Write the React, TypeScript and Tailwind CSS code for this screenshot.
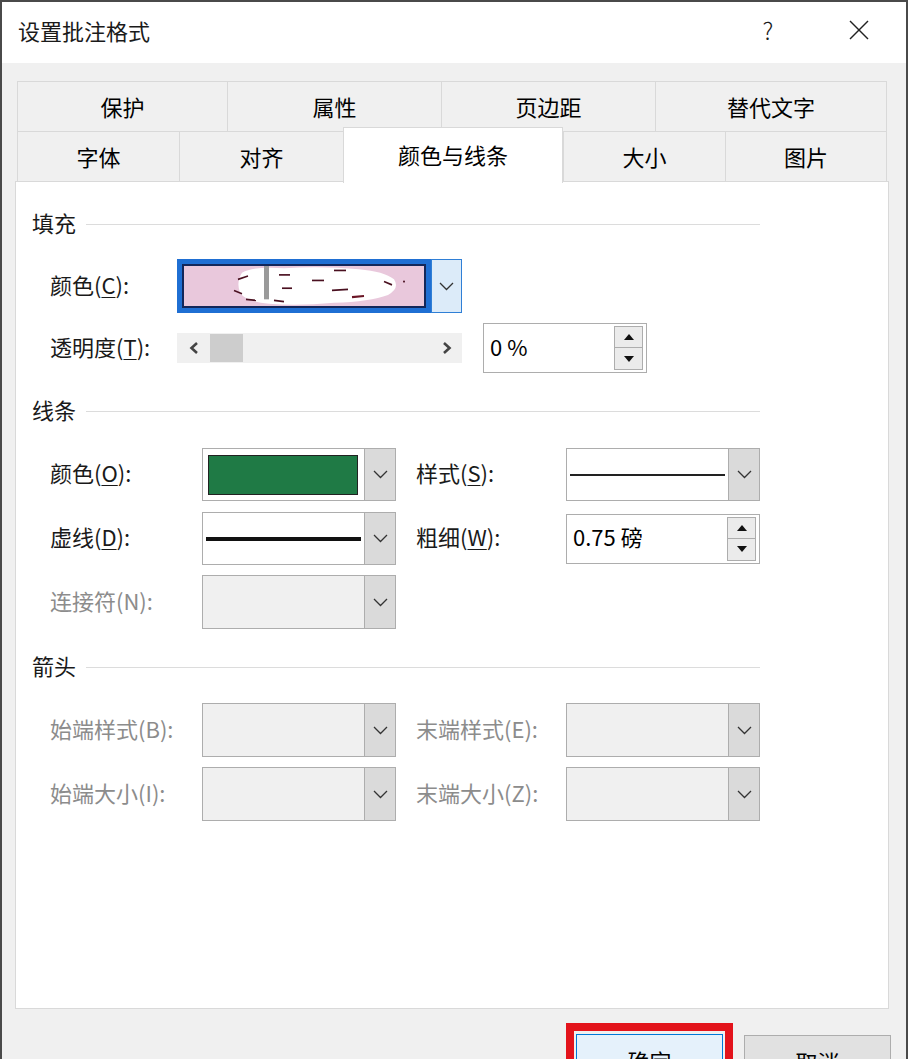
import type { ReactNode } from 'react'

const Chevron = () => (
  <svg width="15" height="9" viewBox="0 0 15 9" fill="none">
    <polyline points="1,1 7.5,7.5 14,1" stroke="#333" strokeWidth="1.3" />
  </svg>
)

const Caret = ({ up }: { up?: boolean }) => (
  <svg width="10" height="6" viewBox="0 0 10 6">
    <polygon points={up ? '0,6 5,0 10,6' : '0,0 10,0 5,6'} fill="#111" />
  </svg>
)

function Label({ text, u, disabled, w }: { text: string; u?: string; disabled?: boolean; w: string }) {
  // text like 颜色(C): where u is the underlined key letter
  if (!u) {
    return <div className={`${w} shrink-0 pb-[5px] ${disabled ? 'text-[#8c8c8c]' : 'text-[#1a1a1a]'}`}>{text}</div>
  }
  const [before, after] = text.split(u)
  return (
    <div className={`${w} shrink-0 pb-[5px] text-[#1a1a1a]`}>
      {before}
      <span className="underline underline-offset-[3px] decoration-1">{u}</span>
      {after}
    </div>
  )
}

function Combo({ children, disabled }: { children?: ReactNode; disabled?: boolean }) {
  return (
    <div className={`flex w-[194px] h-full border border-[#adadad] ${disabled ? 'bg-[#f0f0f0]' : 'bg-white'}`}>
      <div className="flex-1 min-w-0 flex items-center">{children}</div>
      <div className="w-[31px] shrink-0 flex items-center justify-center border-l border-[#adadad] bg-[#dadada]">
        <Chevron />
      </div>
    </div>
  )
}

function Spinner({ value, w }: { value: string; w: string }) {
  return (
    <div className={`${w} h-[50px] flex items-center border border-[#adadad] bg-white`}>
      <div className="flex-1 pl-[6px] pb-[5px]">{value}</div>
      <div className="flex flex-col mr-[3px]">
        <div className="w-[29px] h-[22px] flex items-center justify-center border border-[#adadad] bg-[#ebebeb]">
          <Caret up />
        </div>
        <div className="w-[29px] h-[22px] flex items-center justify-center border border-t-0 border-[#adadad] bg-[#ebebeb]">
          <Caret />
        </div>
      </div>
    </div>
  )
}

function Header({ text }: { text: string }) {
  return (
    <div className="flex items-center h-[30px] w-[728px] text-[#1a1a1a]">
      <span className="pb-[4px]">{text}</span>
      <div className="flex-1 h-px bg-[#dcdcdc] ml-[10px]" />
    </div>
  )
}

const tabsTop = [
  { name: '保护', w: 'w-[210px]' },
  { name: '属性', w: 'w-[214px]' },
  { name: '页边距', w: 'w-[214px]' },
  { name: '替代文字', w: 'w-[232px]' },
]

const tabsBottom = [
  { name: '字体', w: 'w-[162px]' },
  { name: '对齐', w: 'w-[164px]' },
  { name: '颜色与线条', w: 'w-[220px]', active: true },
  { name: '大小', w: 'w-[162px]' },
  { name: '图片', w: 'w-[162px]' },
]

export default function App() {
  return (
    <div className="w-[908px] h-[1059px] overflow-hidden border-2 border-b-0 border-[#4a4a4a] bg-[#f0f0f0] text-[22px] leading-none font-['Noto_Sans_CJK_SC','Microsoft_YaHei',sans-serif]">
      {/* title bar */}
      <div className="h-[61px] bg-white flex items-center pl-[16px] pb-[5px] text-[#1a1a1a]">
        <span className="flex-1">设置批注格式</span>
        <span className="w-[20px] text-center font-light mr-[70px] text-[24px]">?</span>
        <svg width="22" height="22" viewBox="0 0 22 22" className="mr-[36px]">
          <line x1="2" y1="2" x2="20" y2="20" stroke="#222" strokeWidth="1.4" />
          <line x1="20" y1="2" x2="2" y2="20" stroke="#222" strokeWidth="1.4" />
        </svg>
      </div>

      <div className="pl-[13px] pt-[18px]">
        {/* tabs */}
        <div className="ml-[2px] flex h-[50px]">
          {tabsTop.map((t, i) => (
            <div
              key={t.name}
              className={`${t.w} flex items-center justify-center pb-[2px] border-t border-l border-[#d9d9d9] ${i === tabsTop.length - 1 ? 'border-r' : ''}`}
            >
              {t.name}
            </div>
          ))}
        </div>
        <div className="ml-[2px] flex items-start h-[50px]">
          {tabsBottom.map((t, i) =>
            t.active ? (
              <div
                key={t.name}
                className={`${t.w} relative z-10 -mt-[4px] h-[56px] flex items-center justify-center pb-[4px] bg-white border-t border-l border-r border-[#d9d9d9]`}
              >
                {t.name}
              </div>
            ) : (
              <div
                key={t.name}
                className={`${t.w} h-[50px] flex items-center justify-center pb-[2px] border-t border-l border-[#d9d9d9] ${i === tabsBottom.length - 1 ? 'border-r' : ''}`}
              >
                {t.name}
              </div>
            ),
          )}
        </div>

        {/* panel */}
        <div className="w-[874px] h-[828px] bg-white border border-[#d9d9d9] pl-[16px] pt-[27px]">
          <Header text="填充" />
          <div className="ml-[18px] mt-[20px] flex items-center h-[54px]">
            <Label text="颜色(C):" u="C" w="w-[127px]" />
            <div className="flex w-[285px] h-full">
              <div className="w-[254px] h-full bg-[#1f6fd3] p-[5px]">
                <div className="w-full h-full border-2 border-[#13275a] bg-[#e9c8dc]">
                  <svg viewBox="0 0 240 36" preserveAspectRatio="none" className="w-full h-full">
                    <path d="M58 6 Q70 0 100 2 Q140 0 175 3 Q200 5 210 12 Q216 20 204 26 Q186 32 150 33 Q115 36 85 34 Q62 32 56 24 Q52 14 58 6Z" fill="#fff" />
                    <rect x="80" y="0" width="5" height="30" fill="#9a9a9a" />
                    <line x1="54" y1="12" x2="64" y2="9" stroke="#4a1020" strokeWidth="1.5" />
                    <line x1="50" y1="22" x2="58" y2="25" stroke="#4a1020" strokeWidth="1.5" />
                    <line x1="62" y1="30" x2="72" y2="31" stroke="#4a1020" strokeWidth="1.5" />
                    <line x1="95" y1="8" x2="106" y2="8" stroke="#4a1020" strokeWidth="1.5" />
                    <line x1="98" y1="20" x2="108" y2="20" stroke="#4a1020" strokeWidth="1.5" />
                    <line x1="128" y1="13" x2="140" y2="13" stroke="#4a1020" strokeWidth="1.5" />
                    <line x1="150" y1="4" x2="162" y2="4" stroke="#4a1020" strokeWidth="1.5" />
                    <line x1="148" y1="22" x2="164" y2="21" stroke="#4a1020" strokeWidth="1.5" />
                    <line x1="168" y1="28" x2="180" y2="27" stroke="#6a1525" strokeWidth="2" />
                    <line x1="200" y1="14" x2="208" y2="17" stroke="#4a1020" strokeWidth="1.5" />
                    <circle cx="220" cy="14" r="1" fill="#4a1020" />
                    <line x1="90" y1="31" x2="100" y2="32" stroke="#4a1020" strokeWidth="1.5" />
                  </svg>
                </div>
              </div>
              <div className="flex-1 flex items-center justify-center border border-[#2f7fd6] bg-[#dcebf9]">
                <Chevron />
              </div>
            </div>
          </div>
          <div className="ml-[18px] mt-[10px] flex items-center h-[50px]">
            <Label text="透明度(T):" u="T" w="w-[127px]" />
            <div className="w-[285px] h-[30px] flex items-center bg-[#f0f0f0]">
              <div className="w-[33px] flex justify-center">
                <svg width="10" height="14" viewBox="0 0 10 14">
                  <polyline points="8,2 2.5,7 8,12" fill="none" stroke="#444" strokeWidth="2.6" />
                </svg>
              </div>
              <div className="w-[33px] h-[28px] bg-[#cdcdcd]" />
              <div className="flex-1" />
              <div className="w-[30px] flex justify-center">
                <svg width="10" height="14" viewBox="0 0 10 14">
                  <polyline points="2,2 7.5,7 2,12" fill="none" stroke="#444" strokeWidth="2.6" />
                </svg>
              </div>
            </div>
            <div className="ml-[21px]">
              <Spinner value="0 %" w="w-[164px]" />
            </div>
          </div>

          <div className="mt-[23px]">
            <Header text="线条" />
          </div>
          <div className="ml-[18px] mt-[22px] flex items-center h-[53px]">
            <Label text="颜色(O):" u="O" w="w-[152px]" />
            <Combo>
              <div className="w-full h-[40px] ml-[5px] mr-[6px] border border-[#222] bg-[#1f7a45]" />
            </Combo>
            <div className="w-[20px]" />
            <Label text="样式(S):" u="S" w="w-[150px]" />
            <Combo>
              <div className="w-full mx-[3px] h-[2px] bg-[#222]" />
            </Combo>
          </div>
          <div className="ml-[18px] mt-[11px] flex items-center h-[53px]">
            <Label text="虚线(D):" u="D" w="w-[152px]" />
            <Combo>
              <div className="w-full mx-[3px] h-[4px] bg-[#111]" />
            </Combo>
            <div className="w-[20px]" />
            <Label text="粗细(W):" u="W" w="w-[150px]" />
            <Spinner value="0.75 磅" w="w-[194px]" />
          </div>
          <div className="ml-[18px] mt-[10px] flex items-center h-[54px]">
            <Label text="连接符(N):" disabled w="w-[152px]" />
            <Combo disabled />
          </div>

          <div className="mt-[23px]">
            <Header text="箭头" />
          </div>
          <div className="ml-[18px] mt-[21px] flex items-center h-[54px]">
            <Label text="始端样式(B):" disabled w="w-[152px]" />
            <Combo disabled />
            <div className="w-[20px]" />
            <Label text="末端样式(E):" disabled w="w-[150px]" />
            <Combo disabled />
          </div>
          <div className="ml-[18px] mt-[10px] flex items-center h-[54px]">
            <Label text="始端大小(I):" disabled w="w-[152px]" />
            <Combo disabled />
            <div className="w-[20px]" />
            <Label text="末端大小(Z):" disabled w="w-[150px]" />
            <Combo disabled />
          </div>
        </div>

        {/* buttons */}
        <div className="flex items-start mt-[14px] ml-[551px]">
          <div className="border-[8px] border-[#e3131b] p-[2px] pt-[3px]">
            <div className="w-[147px] h-[52px] flex items-center justify-center border border-[#0078d7] bg-[#e5f1fb]">
              确定
            </div>
          </div>
          <div className="ml-[11px] mt-[12px] w-[147px] h-[52px] flex items-center justify-center border border-[#adadad] bg-[#e1e1e1]">
            取消
          </div>
        </div>
      </div>
    </div>
  )
}
